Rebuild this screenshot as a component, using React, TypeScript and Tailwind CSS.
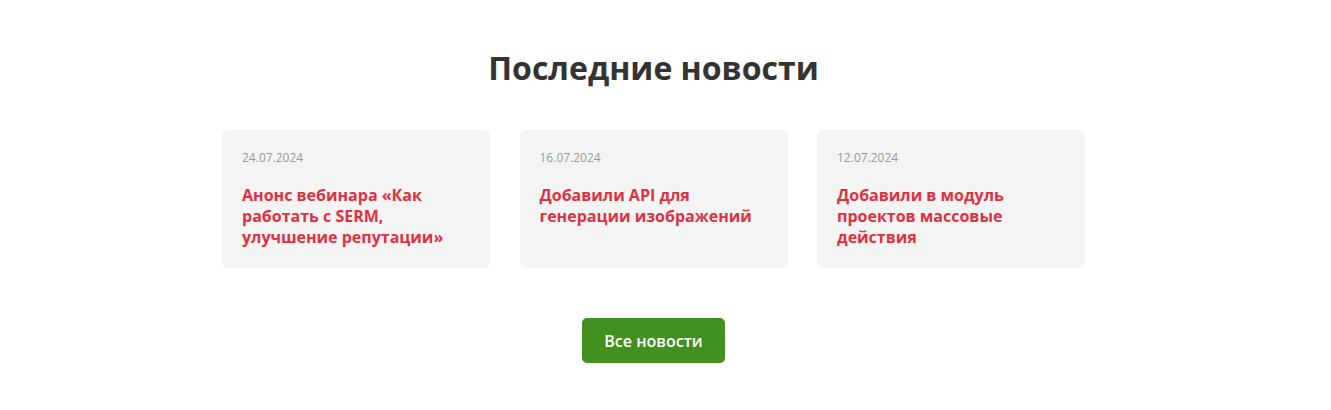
const news = [
  { date: "24.07.2024", title: "Анонс вебинара «Как работать с SERM, улучшение репутации»" },
  { date: "16.07.2024", title: "Добавили API для генерации изображений" },
  { date: "12.07.2024", title: "Добавили в модуль проектов массовые действия" },
];

export default function App() {
  return (
    <div className="bg-white min-h-[410px] pr-[24px] font-['Open_Sans',sans-serif]">
      <div className="flex flex-col items-center pt-[46px]">
        <h2 className="text-[32px] leading-[44px] font-bold text-[#333333]">Последние новости</h2>
        <div className="flex gap-[29.5px] mt-[40px]">
          {news.map((item) => (
            <a
              key={item.date}
              href="#"
              className="w-[268px] h-[138px] bg-[#f4f4f4] rounded-[6px] px-[20px] pt-[20px]"
            >
              <div className="text-[12px] leading-[16px] text-[#9a9a9a]">{item.date}</div>
              <div className="mt-[19px] text-[16px] leading-[21px] font-bold text-[#de3242] pr-[6px]">
                {item.title}
              </div>
            </a>
          ))}
        </div>
        <button className="mt-[50px] w-[143px] h-[45px] rounded-[5px] bg-[#42901f] text-white text-[16px] font-semibold">
          Все новости
        </button>
      </div>
    </div>
  );
}
